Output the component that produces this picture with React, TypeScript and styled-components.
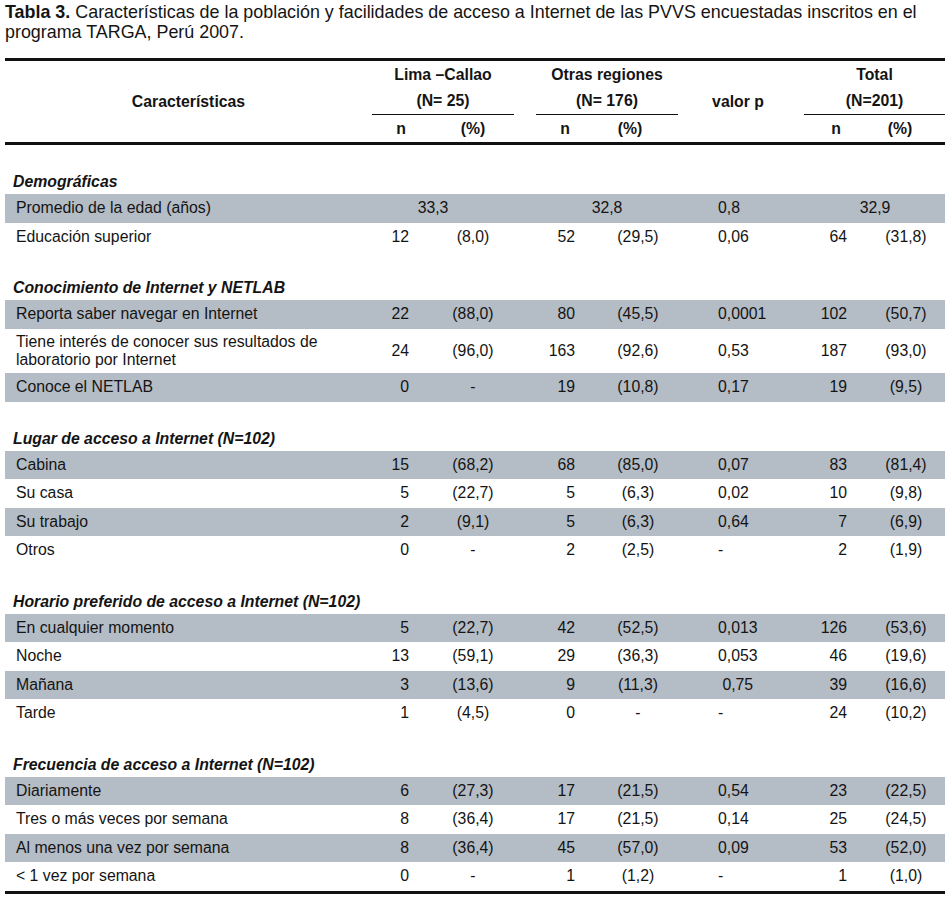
import React from "react";
import styled, { createGlobalStyle } from "styled-components";

const GlobalStyle = createGlobalStyle`
  html, body { margin: 0; padding: 0; background: #ffffff; }
  body { font-family: "Liberation Sans", Arial, sans-serif; color: #141414; }
`;

const COLS = "367px 58px 86px 74px 96px 104px 72px 83px";

const Page = styled.div`
  width: 950px;
  padding: 2px 0 0 0;
`;

const Title = styled.p`
  margin: 0 0 16px 0;
  padding: 0 5px;
  font-size: 17.9px;
  line-height: 20px;
  color: #141414;
`;

const TitleBold = styled.b`
  font-weight: 700;
`;

const Table = styled.div`
  margin: 0 5px;
  width: 940px;
  border-top: 3px solid #111;
  border-bottom: 3px solid #111;
`;

const Head = styled.div`
  display: grid;
  grid-template-columns: ${COLS};
  grid-template-rows: 27px 27px 27px;
  border-bottom: 3px solid #111;
  font-weight: 700;
  font-size: 15.8px;
`;

const HeadSpan = styled.div<{ $col: string }>`
  grid-column: ${(p) => p.$col};
  grid-row: 1 / 4;
  display: flex;
  align-items: center;
  justify-content: center;
`;

const GroupTitle = styled.div<{ $col: string; $ml: number; $mr: number }>`
  grid-column: ${(p) => p.$col};
  grid-row: 1;
  margin: 0 ${(p) => p.$mr}px 0 ${(p) => p.$ml}px;
  display: flex;
  align-items: center;
  justify-content: center;
  padding-top: 1px;
`;

const GroupN = styled.div<{ $col: string; $ml: number; $mr: number }>`
  grid-column: ${(p) => p.$col};
  grid-row: 2;
  margin: 0 ${(p) => p.$mr}px 0 ${(p) => p.$ml}px;
  display: flex;
  align-items: center;
  justify-content: center;
  border-bottom: 1.5px solid #111;
`;

const SubHead = styled.div<{ $col: number; $pl?: number; $pr?: number }>`
  grid-column: ${(p) => p.$col};
  grid-row: 3;
  display: flex;
  align-items: center;
  justify-content: center;
  padding-left: ${(p) => p.$pl ?? 0}px;
  padding-right: ${(p) => p.$pr ?? 0}px;
`;

const SectionTitle = styled.div`
  height: 24px;
  margin-top: 25px;
  padding-left: 8px;
  display: flex;
  align-items: center;
  font-size: 15.8px;
  font-weight: 700;
  font-style: italic;
`;

const Row = styled.div<{ $shaded: boolean; $tall?: boolean }>`
  display: grid;
  grid-template-columns: ${COLS};
  align-items: center;
  height: ${(p) => (p.$tall ? "44.5px" : "28.5px")};
  background: ${(p) => (p.$shaded ? "#b4bcc5" : "transparent")};
  font-size: 15.8px;
  line-height: 18px;
`;

const Label = styled.div`
  padding-left: 11px;
`;

const Cell = styled.div<{ $align: string; $pl?: number; $pr?: number }>`
  text-align: ${(p) => p.$align};
  padding-left: ${(p) => p.$pl ?? 0}px;
  padding-right: ${(p) => p.$pr ?? 0}px;
`;

const Merged = styled.div<{ $col: string; $pl?: number; $pr?: number }>`
  grid-column: ${(p) => p.$col};
  text-align: center;
  padding-left: ${(p) => p.$pl ?? 0}px;
  padding-right: ${(p) => p.$pr ?? 0}px;
`;

const PValue = styled.div<{ $col: string }>`
  grid-column: ${(p) => p.$col};
  padding-left: 32px;
`;

type ColSpec = { align: string; pl?: number; pr?: number };
const colSpecs: ColSpec[] = [
  { align: "right", pr: 21 },
  { align: "center" },
  { align: "right", pr: 15 },
  { align: "center" },
  { align: "left", pl: 32 },
  { align: "right", pr: 15 },
  { align: "center", pl: 5 },
];

type DataRow = {
  label: React.ReactNode;
  values?: string[];
  merged?: [string, string, string, string];
  tall?: boolean;
};

type Section = { title: string; rows: DataRow[] };

const sections: Section[] = [
  {
    title: "Demográficas",
    rows: [
      { label: "Promedio de la edad (años)", merged: ["33,3", "32,8", "0,8", "32,9"] },
      { label: "Educación superior", values: ["12", "(8,0)", "52", "(29,5)", "0,06", "64", "(31,8)"] },
    ],
  },
  {
    title: "Conocimiento de Internet y NETLAB",
    rows: [
      { label: "Reporta saber navegar en Internet", values: ["22", "(88,0)", "80", "(45,5)", "0,0001", "102", "(50,7)"] },
      {
        label: (
          <>
            Tiene interés de conocer sus resultados de
            <br />
            laboratorio por Internet
          </>
        ),
        values: ["24", "(96,0)", "163", "(92,6)", "0,53", "187", "(93,0)"],
        tall: true,
      },
      { label: "Conoce el NETLAB", values: ["0", "-", "19", "(10,8)", "0,17", "19", "(9,5)"] },
    ],
  },
  {
    title: "Lugar de acceso a Internet (N=102)",
    rows: [
      { label: "Cabina", values: ["15", "(68,2)", "68", "(85,0)", "0,07", "83", "(81,4)"] },
      { label: "Su casa", values: ["5", "(22,7)", "5", "(6,3)", "0,02", "10", "(9,8)"] },
      { label: "Su trabajo", values: ["2", "(9,1)", "5", "(6,3)", "0,64", "7", "(6,9)"] },
      { label: "Otros", values: ["0", "-", "2", "(2,5)", "-", "2", "(1,9)"] },
    ],
  },
  {
    title: "Horario preferido de acceso a Internet (N=102)",
    rows: [
      { label: "En cualquier momento", values: ["5", "(22,7)", "42", "(52,5)", "0,013", "126", "(53,6)"] },
      { label: "Noche", values: ["13", "(59,1)", "29", "(36,3)", "0,053", "46", "(19,6)"] },
      { label: "Mañana", values: ["3", "(13,6)", "9", "(11,3)", "\u00a00,75", "39", "(16,6)"] },
      { label: "Tarde", values: ["1", "(4,5)", "0", "-", "-", "24", "(10,2)"] },
    ],
  },
  {
    title: "Frecuencia de acceso a Internet (N=102)",
    rows: [
      { label: "Diariamente", values: ["6", "(27,3)", "17", "(21,5)", "0,54", "23", "(22,5)"] },
      { label: "Tres o más veces por semana", values: ["8", "(36,4)", "17", "(21,5)", "0,14", "25", "(24,5)"] },
      { label: "Al menos una vez por semana", values: ["8", "(36,4)", "45", "(57,0)", "0,09", "53", "(52,0)"] },
      { label: "< 1 vez por semana", values: ["0", "-", "1", "(1,2)", "-", "1", "(1,0)"] },
    ],
  },
];

export default function App() {
  return (
    <Page>
      <GlobalStyle />
      <Title>
        <TitleBold>Tabla 3.</TitleBold> Características de la población y facilidades de acceso a Internet de las PVVS
        encuestadas inscritos en el programa TARGA, Perú 2007.
      </Title>
      <Table>
        <Head>
          <HeadSpan $col="1">Características</HeadSpan>
          <GroupTitle $col="2 / 4" $ml={0} $mr={2}>Lima –Callao</GroupTitle>
          <GroupN $col="2 / 4" $ml={0} $mr={2}>(N= 25)</GroupN>
          <GroupTitle $col="4 / 6" $ml={20} $mr={8}>Otras regiones</GroupTitle>
          <GroupN $col="4 / 6" $ml={20} $mr={8}>(N= 176)</GroupN>
          <HeadSpan $col="6">valor p</HeadSpan>
          <GroupTitle $col="7 / 9" $ml={14} $mr={0}>Total</GroupTitle>
          <GroupN $col="7 / 9" $ml={14} $mr={0}>(N=201)</GroupN>
          <SubHead $col={2}>n</SubHead>
          <SubHead $col={3}>(%)</SubHead>
          <SubHead $col={4} $pl={24}>n</SubHead>
          <SubHead $col={5} $pr={16}>(%)</SubHead>
          <SubHead $col={7} $pl={20}>n</SubHead>
          <SubHead $col={8} $pr={7}>(%)</SubHead>
        </Head>
        {sections.map((s) => (
          <React.Fragment key={s.title}>
            <SectionTitle>{s.title}</SectionTitle>
            {s.rows.map((r, i) => (
              <Row key={i} $shaded={i % 2 === 0} $tall={r.tall}>
                <Label>{r.label}</Label>
                {r.merged ? (
                  <>
                    <Merged $col="2 / 4" $pr={22}>{r.merged[0]}</Merged>
                    <Merged $col="4 / 6" $pl={12}>{r.merged[1]}</Merged>
                    <PValue $col="6">{r.merged[2]}</PValue>
                    <Merged $col="7 / 9" $pl={15}>{r.merged[3]}</Merged>
                  </>
                ) : (
                  r.values!.map((v, j) => (
                    <Cell key={j} $align={colSpecs[j].align} $pl={colSpecs[j].pl} $pr={colSpecs[j].pr}>
                      {v}
                    </Cell>
                  ))
                )}
              </Row>
            ))}
          </React.Fragment>
        ))}
      </Table>
    </Page>
  );
}
